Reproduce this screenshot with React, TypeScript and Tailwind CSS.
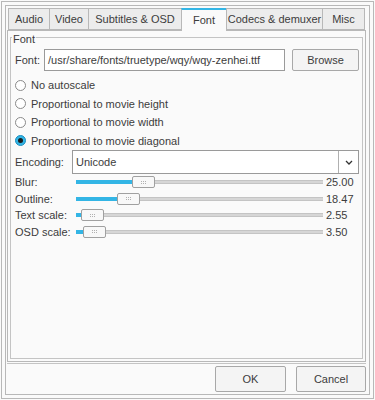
import React from 'react';

const tabs = ['Audio', 'Video', 'Subtitles & OSD', 'Font', 'Codecs & demuxer', 'Misc'];
const tabWidths = ['w-[41px]', 'w-[39px]', 'w-[93px]', 'w-[45px]', 'w-[96px]', 'w-[43px]'];

const radios = [
  { label: 'No autoscale', checked: false },
  { label: 'Proportional to movie height', checked: false },
  { label: 'Proportional to movie width', checked: false },
  { label: 'Proportional to movie diagonal', checked: true },
];

// fill = px of blue before the handle
const sliders = [
  { label: 'Blur:', fill: 'w-[56px]', value: '25.00' },
  { label: 'Outline:', fill: 'w-[41px]', value: '18.47' },
  { label: 'Text scale:', fill: 'w-[5px]', value: '2.55' },
  { label: 'OSD scale:', fill: 'w-[7px]', value: '3.50' },
];

const Radio = ({ checked }: { checked: boolean }) =>
  checked ? (
    <span className="w-[11px] h-[11px] rounded-full border border-[#1d8fc0] bg-[#33b5e5] flex items-center justify-center">
      <span className="w-[5px] h-[5px] rounded-full bg-[#1a1a1a]" />
    </span>
  ) : (
    <span className="w-[11px] h-[11px] rounded-full border border-[#8a8a8a] bg-white" />
  );

const Grip = () => (
  <div className="grid grid-cols-3 gap-[1px]">
    {Array.from({ length: 6 }).map((_, i) => (
      <span key={i} className="w-[1px] h-[1px] bg-[#b0b0b0]" />
    ))}
  </div>
);

const App = () => {
  return (
    <div
      className="w-[375px] h-[400px] bg-[#fafafa] p-[1px] text-[11px] text-[#3c3c3c]"
      style={{ fontFamily: '"Liberation Sans", Arial, sans-serif' }}
    >
      <div className="h-full border border-[#b8b8b8] p-[3px]">
        <div className="h-full border border-[#b8b8b8] pl-[1px] pr-[2px] pt-[2px] flex flex-col">
          {/* tab bar */}
          <div className="flex h-[22px] pl-[1px]">
            {tabs.map((t, i) => {
              const active = t === 'Font';
              return (
                <div
                  key={t}
                  className={
                    'flex items-center justify-center border-l border-[#b8b8b8] ' +
                    tabWidths[i] +
                    (active
                      ? ' bg-[#fafafa] border-t-2 border-t-[#33b5e5] -mb-[1px] z-10'
                      : ' bg-[#ececec] border-t border-t-[#b8b8b8] border-b border-b-[#b8b8b8]') +
                    (i === tabs.length - 1 ? ' border-r' : '')
                  }
                >
                  {t}
                </div>
              );
            })}
          </div>

          {/* tab pane */}
          <div className="w-[359px] h-[332px] border border-[#b8b8b8] px-[2px] pt-[6px] pb-[2px]">
            <div className="relative h-full border border-[#c4c4c4] pl-[4px] pr-[3px] pt-[11px]">
              <span className="absolute left-[1px] -top-[4px] bg-[#fafafa] px-[1px] leading-[11px]">Font</span>

              {/* font file row */}
              <div className="flex items-center h-[22px]">
                <span className="w-[29px]">Font:</span>
                <div className="w-[241px] h-[22px] border border-[#9a9a9a] bg-white flex items-center px-[3px]">
                  /usr/share/fonts/truetype/wqy/wqy-zenhei.ttf
                </div>
                <div className="ml-[7px] w-[67px] h-[22px] border border-[#a8a8a8] rounded-[2px] bg-[#f4f4f4] flex items-center justify-center">
                  Browse
                </div>
              </div>

              {/* radios */}
              <div className="flex flex-col mt-[5px]">
                {radios.map((r) => (
                  <div key={r.label} className="flex items-center h-[18.5px] gap-[5px]">
                    <Radio checked={r.checked} />
                    <span>{r.label}</span>
                  </div>
                ))}
              </div>

              {/* encoding */}
              <div className="flex items-center h-[24px]">
                <span className="w-[57px]">Encoding:</span>
                <div className="flex-1 h-[24px] border border-[#9a9a9a] bg-white flex items-center">
                  <span className="flex-1 pl-[3px]">Unicode</span>
                  <span className="w-[20px] h-full border-l border-[#b0b0b0] flex items-center justify-center">
                    <svg width="8" height="5" viewBox="0 0 8 5">
                      <path d="M1 1 L4 4 L7 1" fill="none" stroke="#333" strokeWidth="1.3" />
                    </svg>
                  </span>
                </div>
              </div>

              {/* sliders */}
              <div className="flex flex-col">
                {sliders.map((s) => (
                  <div key={s.label} className="flex items-center h-[16.5px]">
                    <span className="w-[61px]">{s.label}</span>
                    <div className="w-[247px] flex items-center">
                      <div className={'h-[4px] bg-[#33b5e5] ' + s.fill} />
                      <div className="w-[23px] h-[12px] border border-[#a0a0a0] rounded-[2px] bg-[#f8f8f8] flex items-center justify-center">
                        <Grip />
                      </div>
                      <div className="flex-1 h-[4px] bg-[#d6d6d6] border-y border-[#c4c4c4]" />
                    </div>
                    <span className="ml-[3px]">{s.value}</span>
                  </div>
                ))}
              </div>
            </div>
          </div>
          <div className="w-[359px] h-[1px] bg-[#c4c4c4] mt-[1px]" />

          {/* buttons */}
          <div className="flex justify-end gap-[10px] mt-[2px] pr-[1px]">
            <div className="w-[71px] h-[26px] border border-[#a8a8a8] rounded-[2px] bg-[#f4f4f4] flex items-center justify-center">
              OK
            </div>
            <div className="w-[70px] h-[26px] border border-[#a8a8a8] rounded-[2px] bg-[#f4f4f4] flex items-center justify-center">
              Cancel
            </div>
          </div>
        </div>
      </div>
    </div>
  );
};

export default App;
